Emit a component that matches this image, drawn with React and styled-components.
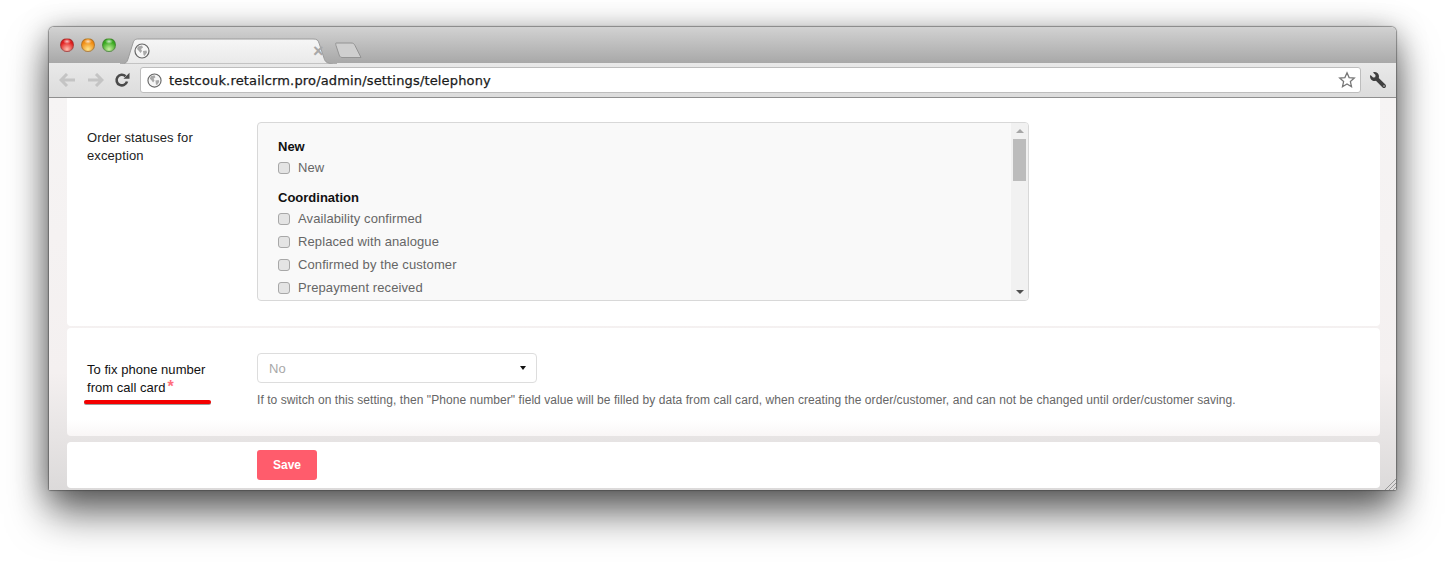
import React from 'react'
import styled, { createGlobalStyle } from 'styled-components'
import { FaWrench } from 'react-icons/fa'

const GlobalStyle = createGlobalStyle`
  html, body {
    margin: 0;
    padding: 0;
    background: #fff;
    font-family: 'Liberation Sans', Arial, sans-serif;
    overflow: hidden;
  }
`

const groups = [
  { title: 'New', items: ['New'] },
  {
    title: 'Coordination',
    items: [
      'Availability confirmed',
      'Replaced with analogue',
      'Confirmed by the customer',
      'Prepayment received',
    ],
  },
]

const Globe = ({ size = 15 }) => (
  <svg width={size} height={size} viewBox='0 0 16 16'>
    <circle cx='8' cy='8' r='7' fill='#f6f6f6' stroke='#666' strokeWidth='1.2' />
    <path d='M4 3.5 L8 2.5 L9 4.5 L7 6 L8 8 L6.5 10 L4.5 7.5 L3 6 Z' fill='#a8a8a8' />
    <path d='M9 8 L12.5 7.5 L13 9.5 L10.5 13 L9.5 12 Z' fill='#a8a8a8' />
  </svg>
)

const App = () => {
  return (
    <Stage>
      <GlobalStyle />
      <Window>
        <TitleBar>
          <Lights>
            <Light $from='#ffc0b0' $to='#e01a1a' />
            <Light $from='#ffe48a' $to='#f08a10' />
            <Light $from='#c8f0a0' $to='#36a81e' />
          </Lights>
          <Tab>
            <TabShape viewBox='0 0 217 26' preserveAspectRatio='none'>
              <defs>
                <linearGradient id='tabFill' x1='0' y1='0' x2='0' y2='1'>
                  <stop offset='0' stopColor='#f6f6f6' />
                  <stop offset='1' stopColor='#e9e9e9' />
                </linearGradient>
              </defs>
              <path
                d='M0 26 C6 26 7 24 8 21 L13 5 C14 2 15 1 19 1 L193 1 C197 1 198 2 199 5 L204 20 C205 24 207 26 217 26 Z'
                fill='url(#tabFill)'
                stroke='#9c9c9c'
              />
            </TabShape>
            <TabIcon>
              <Globe size={16} />
            </TabIcon>
            <TabClose>×</TabClose>
          </Tab>
          <NewTab width='27' height='17' viewBox='0 0 27 17'>
            <path
              d='M1 1 L16 1 C18 1 19 1.5 20 3.5 L26 15.5 L7 15.5 C6 15.5 5 15 4.5 14 L1 3.5 C0.7 2 0.5 1 1 1 Z'
              fill='#cfcfcf'
              stroke='#949494'
            />
          </NewTab>
        </TitleBar>
        <Toolbar>
          <NavIcon width='17' height='14' viewBox='0 0 17 14'>
            <path d='M8 1 L2 7 L8 13 M2 7 L16 7' fill='none' stroke='#c4c4c4' strokeWidth='3' />
          </NavIcon>
          <NavIcon width='17' height='14' viewBox='0 0 17 14'>
            <path d='M9 1 L15 7 L9 13 M15 7 L1 7' fill='none' stroke='#c4c4c4' strokeWidth='3' />
          </NavIcon>
          <Reload width='16' height='16' viewBox='0 0 16 16'>
            <path d='M13 9.5 A5.3 5.3 0 1 1 11.5 4.2' fill='none' stroke='#4a4a4a' strokeWidth='2.6' />
            <path d='M9.5 6.8 L15.5 6.8 L15.5 0.8 Z' fill='#4a4a4a' />
          </Reload>
          <Omnibox>
            <Globe size={15} />
            <Url>testcouk.retailcrm.pro/admin/settings/telephony</Url>
            <svg width='18' height='18' viewBox='0 0 18 18'>
              <path
                d='M9 1.8 L11.1 6.6 L16.3 7.1 L12.4 10.6 L13.5 15.7 L9 13 L4.5 15.7 L5.6 10.6 L1.7 7.1 L6.9 6.6 Z'
                fill='#fff'
                stroke='#777'
                strokeWidth='1.3'
              />
            </svg>
          </Omnibox>
          <Wrench>
            <FaWrench />
          </Wrench>
        </Toolbar>
        <Content>
          <CutCard>
            <Label>
              Order statuses for
              <br />
              exception
            </Label>
            <ListBox>
              <ListInner>
                {groups.map((group) => (
                  <Group key={group.title}>
                    <GroupTitle>{group.title}</GroupTitle>
                    {group.items.map((item) => (
                      <Option key={item}>
                        <Check />
                        {item}
                      </Option>
                    ))}
                  </Group>
                ))}
              </ListInner>
              <ScrollTrack>
                <Arrow $up />
                <Thumb />
                <Arrow />
              </ScrollTrack>
            </ListBox>
          </CutCard>
          <FieldCard>
            <FixLabel>
              To fix phone number
              <br />
              from call card
              <Required>*</Required>
              <Underline />
            </FixLabel>
            <div>
              <Select>
                No
                <Caret />
              </Select>
              <Hint>
                If to switch on this setting, then "Phone number" field value will be filled by data
                from call card, when creating the order/customer, and can not be changed until
                order/customer saving.
              </Hint>
            </div>
          </FieldCard>
          <Footer>
            <SaveButton>Save</SaveButton>
          </Footer>
          <Grip width='11' height='11' viewBox='0 0 11 11'>
            <path d='M0 11 L11 0 M4 11 L11 4 M8 11 L11 8' stroke='#888' strokeWidth='0.8' />
          </Grip>
        </Content>
      </Window>
    </Stage>
  )
}

const Stage = styled.div`
  width: 1445px;
  height: 562px;
  padding: 27px 49px 0;
  box-sizing: border-box;
`

const Window = styled.div`
  width: 1347px;
  height: 463px;
  display: flex;
  flex-direction: column;
  border-radius: 5px 5px 2px 2px;
  box-shadow: 0 0 1px 1px rgba(60, 60, 60, 0.5), 0 24px 40px rgba(0, 0, 0, 0.55),
    0 4px 30px rgba(0, 0, 0, 0.35);
`

const TitleBar = styled.div`
  height: 36px;
  flex: none;
  display: flex;
  align-items: flex-end;
  padding-left: 11px;
  border-radius: 5px 5px 0 0;
  background: linear-gradient(#d2d2d2, #a8a8a8);
  box-sizing: border-box;
`

const Lights = styled.div`
  display: flex;
  gap: 7px;
  align-self: flex-start;
  margin-top: 11px;
`

const Light = styled.span`
  width: 14px;
  height: 14px;
  border-radius: 50%;
  box-sizing: border-box;
  border: 1px solid rgba(80, 80, 80, 0.4);
  background: radial-gradient(ellipse 4px 2.5px at 50% 20%, rgba(255, 255, 255, 0.75), transparent),
    radial-gradient(circle at 50% 85%, ${(p) => p.$from}, ${(p) => p.$to} 65%);
`

const Tab = styled.div`
  position: relative;
  width: 217px;
  height: 26px;
  margin-left: 4px;
  top: 1px;
`

const TabShape = styled.svg`
  position: absolute;
  inset: 0;
  width: 100%;
  height: 100%;
`

const TabIcon = styled.span`
  position: absolute;
  left: 14px;
  top: 5px;
  display: flex;
`

const TabClose = styled.span`
  position: absolute;
  left: 193px;
  top: 3px;
  font-size: 18px;
  line-height: 20px;
  font-weight: 700;
  color: #a8a8a8;
`

const NewTab = styled.svg`
  margin-left: -2px;
  margin-bottom: 4px;
`

const Toolbar = styled.div`
  height: 35px;
  flex: none;
  display: flex;
  align-items: center;
  padding: 0 10px;
  box-sizing: border-box;
  background: linear-gradient(#e9e9e9, #dcdcdc);
  border-bottom: 1px solid #8f8f8f;
`

const NavIcon = styled.svg`
  margin-right: 11px;
`

const Reload = styled.svg`
  margin: 0 10px 0 -1px;
`

const Omnibox = styled.div`
  flex: 1;
  height: 24px;
  display: flex;
  align-items: center;
  gap: 7px;
  padding: 0 4px 0 6px;
  background: #fff;
  border: 1px solid #bdbdbd;
  border-radius: 3px;
`

const Url = styled.span`
  flex: 1;
  font-family: 'DejaVu Sans', sans-serif;
  font-size: 13px;
  color: #1a1a1a;
  letter-spacing: 0.16px;
  -webkit-text-stroke: 0.25px #1a1a1a;
`

const Wrench = styled.span`
  display: flex;
  margin-left: 9px;
  font-size: 16px;
  color: #404040;
  transform: scaleX(-1);
`

const Content = styled.div`
  position: relative;
  flex: 1;
  min-height: 0;
  padding: 0 16px 0 18px;
  background: linear-gradient(#f6f4f4 0, #f4f0f0 70%, #dcdada 100%);
  display: flex;
  flex-direction: column;
`

const Card = styled.div`
  background: #fff;
  display: grid;
  grid-template-columns: 170px 1fr;
`

const CutCard = styled(Card)`
  height: 228px;
  padding: 24px 0 0 20px;
  box-sizing: border-box;
  border-radius: 0 0 4px 4px;
  margin-bottom: 2px;
`

const FieldCard = styled(Card)`
  height: 108px;
  padding: 25px 0 0 20px;
  box-sizing: border-box;
  border-radius: 4px;
  margin-bottom: 6px;
  background: linear-gradient(#fff 85%, #f9f6f6 100%);
`

const Label = styled.div`
  font-size: 13px;
  line-height: 18px;
  color: #222;
  letter-spacing: 0.1px;
  padding-top: 7px;
`

const FixLabel = styled(Label)`
  position: relative;
  padding-top: 8px;
  color: #111;
  letter-spacing: 0.03px;
`

const Required = styled.span`
  margin-left: 2px;
  color: #ff6f7d;
  font-size: 16px;
  font-weight: 700;
  line-height: 0;
`

const Underline = styled.span`
  position: absolute;
  left: -3px;
  top: 47px;
  width: 127px;
  height: 4px;
  border-radius: 2px;
  background: #f40000;
  box-shadow: 0 1px 0 rgba(60, 60, 60, 0.5);
`

const ListBox = styled.div`
  width: 772px;
  height: 179px;
  box-sizing: border-box;
  display: flex;
  background: #f9f9f9;
  border: 1px solid #d8d8d8;
  border-radius: 4px;
  overflow: hidden;
`

const ListInner = styled.div`
  flex: 1;
  padding: 16px 20px 0;
`

const Group = styled.div`
  margin-bottom: 11px;
`

const GroupTitle = styled.div`
  font-size: 13px;
  font-weight: 700;
  line-height: 16px;
  color: #111;
  margin-bottom: 1px;
`

const Option = styled.div`
  display: flex;
  align-items: center;
  gap: 8px;
  height: 23px;
  font-size: 13px;
  letter-spacing: 0.1px;
  color: #666;
`

const Check = styled.span`
  width: 12px;
  height: 12px;
  box-sizing: border-box;
  border: 1px solid #a8a8a8;
  border-radius: 3px;
  background: #e4e4e4;
`

const ScrollTrack = styled.div`
  width: 17px;
  background: #f1f1f1;
  display: flex;
  flex-direction: column;
  align-items: center;
  padding: 6px 0;
  box-sizing: border-box;
`

const Thumb = styled.div`
  width: 13px;
  height: 42px;
  margin-top: 6px;
  background: #bcbcbc;
  margin-bottom: auto;
`

const Arrow = styled.span`
  width: 0;
  height: 0;
  border-left: 4px solid transparent;
  border-right: 4px solid transparent;
  ${(p) =>
    p.$up ? 'border-bottom: 4px solid #a6a6a6;' : 'border-top: 4px solid #505050;'}
`

const Select = styled.div`
  width: 280px;
  height: 30px;
  box-sizing: border-box;
  display: flex;
  align-items: center;
  justify-content: space-between;
  padding: 0 10px 0 11px;
  background: #fff;
  border: 1px solid #ddd;
  border-radius: 4px;
  font-size: 13px;
  color: #a8a8a8;
`

const Caret = styled.span`
  border-left: 3px solid transparent;
  border-right: 3px solid transparent;
  border-top: 4px solid #111;
`

const Hint = styled.div`
  margin-top: 10px;
  font-size: 12px;
  line-height: 14px;
  letter-spacing: 0.07px;
  color: #666;
  white-space: nowrap;
`

const Footer = styled.div`
  height: 46px;
  flex: none;
  box-sizing: border-box;
  padding: 8px 0 0 190px;
  background: #fff;
  border-radius: 4px;
`

const SaveButton = styled.button`
  display: block;
  width: 60px;
  height: 30px;
  border: 0;
  border-radius: 3px;
  background: #ff5c6c;
  color: #fff;
  font-family: inherit;
  font-size: 12px;
  font-weight: 700;
`

const Grip = styled.svg`
  position: absolute;
  right: 0;
  bottom: 0;
`

export default App
